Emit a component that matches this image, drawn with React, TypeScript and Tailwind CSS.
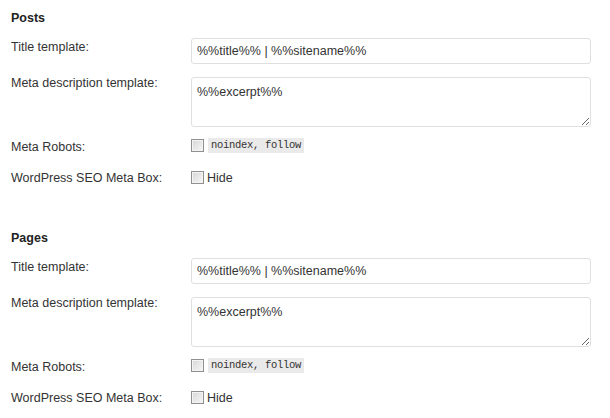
import React from "react";

const LABEL_W = "w-[180px] shrink-0";

function Box() {
  return (
    <span className="inline-block h-[13px] w-[13px] shrink-0 border border-[#8f8f8f] bg-linear-to-br from-[#d6d6d6] to-[#f7f7f7] shadow-[inset_0_0_0_1px_#f4f4f4]" />
  );
}

function Section({ title }: { title: string }) {
  return (
    <section className="flex flex-col">
      <h3 className="h-[16px] text-[12.5px] leading-[16px] font-bold text-[#222]">{title}</h3>

      <div className="mt-[12px] flex h-[26px] items-start">
        <div className={`${LABEL_W} pt-[1px] leading-[16px]`}>Title template:</div>
        <input
          readOnly
          defaultValue="%%title%% | %%sitename%%"
          className="h-[26px] w-[400px] rounded-[3px] border border-[#dfdfdf] bg-white px-[5px] text-[12.5px] leading-[16px] text-[#333] outline-none"
        />
      </div>

      <div className="mt-[13px] flex h-[50px] items-start">
        <div className={`${LABEL_W} -mt-[2px] leading-[16px]`}>Meta description template:</div>
        <textarea
          readOnly
          defaultValue="%%excerpt%%"
          className="h-[50px] w-[400px] rounded-[3px] border border-[#dfdfdf] bg-white px-[5px] pt-[6px] text-[12.5px] leading-[16px] text-[#333] outline-none"
        />
      </div>

      <div className="mt-[11px] flex h-[15px] items-start">
        <div className={`${LABEL_W} h-[15px] pt-[1px] leading-[16px]`}>Meta Robots:</div>
        <div className="flex h-[15px] items-center gap-[4px]">
          <Box />
          <code className="h-[15px] bg-[#eaeaea] px-[3px] font-['Liberation_Mono',monospace] text-[10.5px] leading-[15px] tracking-[-0.3px] text-[#333]">
            noindex, follow
          </code>
        </div>
      </div>

      <div className="mt-[17px] flex h-[15px] items-start">
        <div className={`${LABEL_W} h-[15px] leading-[16px]`}>WordPress SEO Meta Box:</div>
        <div className="flex h-[15px] items-center gap-[3px]">
          <Box />
          <span className="leading-[16px]">Hide</span>
        </div>
      </div>
    </section>
  );
}

export default function App() {
  return (
    <div className="flex min-h-[418px] w-[610px] flex-col gap-[45px] bg-white pl-[11px] pt-[10px] font-['Liberation_Sans',Arial,sans-serif] text-[12.5px] text-[#333]">
      <Section title="Posts" />
      <Section title="Pages" />
    </div>
  );
}
